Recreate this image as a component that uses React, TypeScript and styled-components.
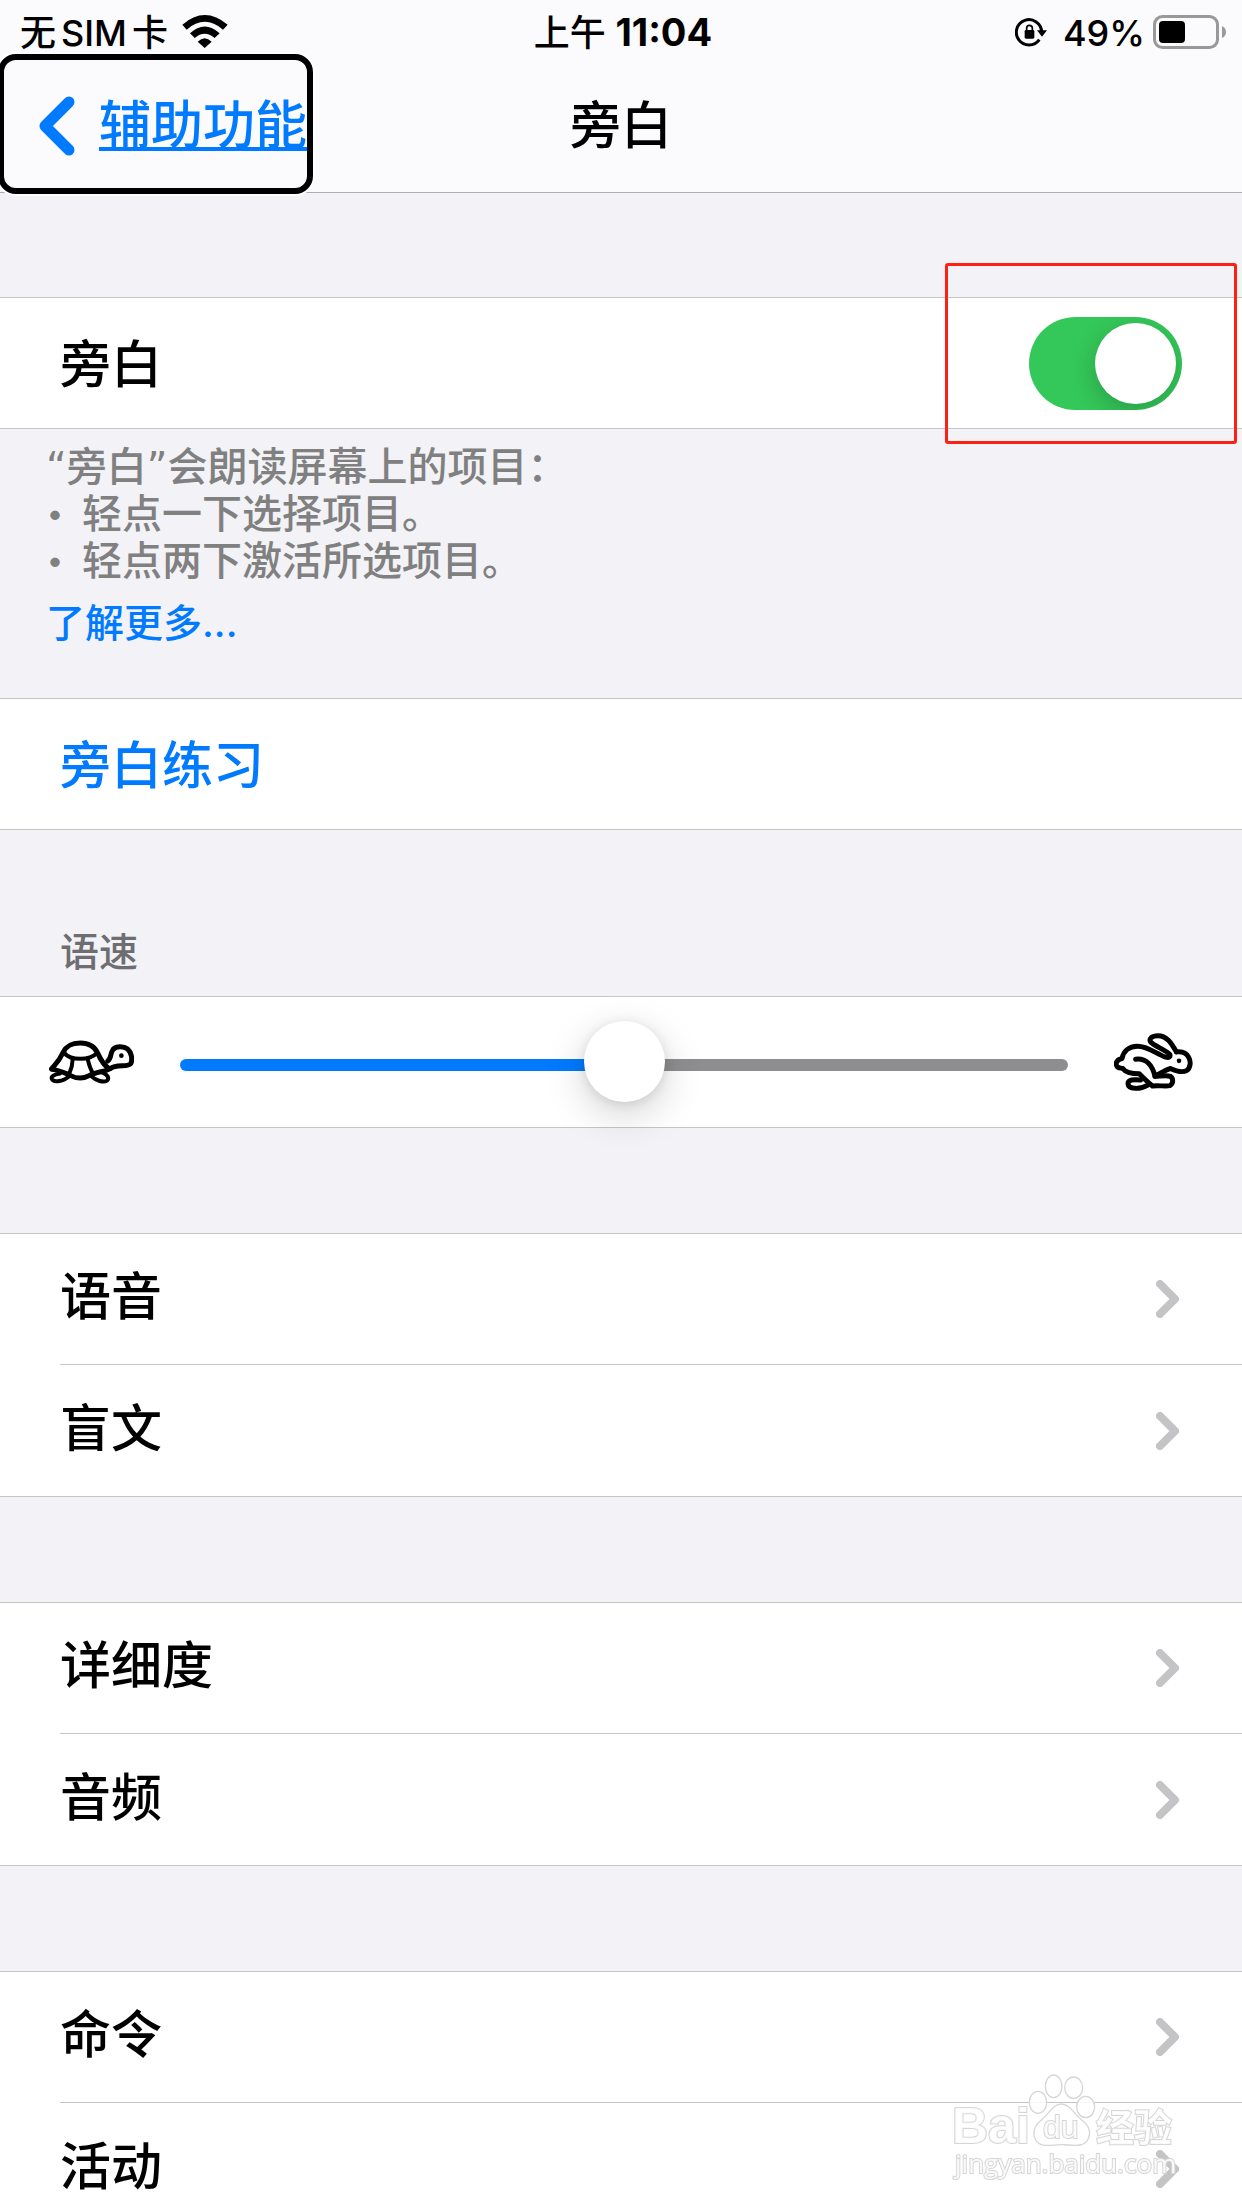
import React, { useState } from "react";
import styled, { createGlobalStyle } from "styled-components";

const blue = "#007aff";
const line = "#c6c6c8";

const GlobalStyle = createGlobalStyle`
  * { box-sizing: border-box; }
  body {
    margin: 0;
    background: #f2f2f7;
    color: #000;
    font-family: Inter, "Noto Sans CJK SC", sans-serif;
    font-size: 51px;
    font-weight: 500;
    line-height: 60px;
  }
  button, input { font: inherit; }
`;

const Screen = styled.div`
  height: 100vh;
  display: flex;
  flex-direction: column;
  overflow: hidden;
`;

const Header = styled.header`
  flex: none;
  background: #fbfafd;
  border-bottom: 1px solid #adadb1;
`;

const StatusBar = styled.div`
  height: 60px;
  padding: 0 16px 0 20px;
  display: grid;
  grid-template-columns: 1fr auto 1fr;
  align-items: center;
  font-size: 36px;
`;

const StatusGroup = styled.div<{ $end?: boolean }>`
  display: flex;
  align-items: center;
  justify-content: ${(p) => (p.$end ? "flex-end" : "flex-start")};
  gap: ${(p) => (p.$end ? "8px" : "14px")};
`;

const Carrier = styled.span`
  padding-top: 2px;
  span { margin: 0 5px; }
`;

const Clock = styled.time`
  padding-top: 2px;
  b {
    font-size: 38px;
    font-weight: 700;
  }
`;

const Percent = styled.span`
  padding: 2px 0 0 8px;
`;

const NavBar = styled.div`
  height: 132px;
  display: grid;
  grid-template-columns: 1fr auto 1fr;
  align-items: center;
`;

const BackButton = styled.button`
  justify-self: start;
  align-self: start;
  height: 128px;
  margin-left: 4px;
  padding: 4px 0 0 35px;
  display: flex;
  align-items: center;
  gap: 24px;
  border: 0;
  border-radius: 12px;
  background: transparent;
  color: ${blue};
  font-size: 52px;
  outline: 6px solid #000;
  box-shadow: 0 0 0 8px #fff;
  text-decoration: underline;
  text-decoration-thickness: 4px;
  text-underline-offset: 3px;
  text-decoration-skip-ink: none;
`;

const Title = styled.h1`
  margin: 0;
  font-size: 51px;
  font-weight: 500;
`;

const Main = styled.main`
  flex: 1;
  min-height: 0;
  padding-top: 104px;
  overflow-y: auto;
  scrollbar-width: none;
`;

const Group = styled.section`
  margin-bottom: 105px;
  background: #fff;
  border-top: 1px solid ${line};
  border-bottom: 1px solid ${line};
`;

const LeadGroup = styled(Group)`
  margin-bottom: 0;
`;

const Cell = styled.div`
  height: 130px;
  padding: 0 60px;
  display: flex;
  align-items: center;
  justify-content: space-between;
  label { padding-top: 4px; }
`;

const SliderCell = styled(Cell)`
  padding: 0 49px;
  gap: 46px;
  svg { flex: none; }
`;

const ActionButton = styled.button`
  display: block;
  width: 100%;
  height: 130px;
  padding: 4px 60px 0;
  border: 0;
  background: transparent;
  color: ${blue};
  text-align: left;
`;

const LinkList = styled.ul`
  margin: 0;
  padding: 0 0 0 60px;
  list-style: none;
  li + li { border-top: 1px solid ${line}; }
`;

const LinkRow = styled.a`
  height: 130px;
  padding-right: 63px;
  display: flex;
  align-items: center;
  justify-content: space-between;
  color: inherit;
  text-decoration: none;
  span { padding-bottom: 4px; }
  li + li & { height: 131px; }
`;

const SwitchBox = styled.span`
  position: relative;
  display: flex;
  &::after {
    content: "";
    position: absolute;
    inset: -54px -55px -34px -84px;
    border: 3px solid #ff2015;
    border-radius: 3px;
    pointer-events: none;
  }
`;

const Switch = styled.input`
  appearance: none;
  width: 153px;
  height: 93px;
  margin: 0;
  padding: 6px;
  display: flex;
  border-radius: 47px;
  overflow: hidden;
  background: #e9e9ea;
  &::before {
    content: "";
    width: 81px;
    height: 81px;
    border-radius: 50%;
    background: #fff;
    box-shadow: 0 8px 24px rgba(0, 0, 0, 0.2);
  }
  &:checked {
    justify-content: flex-end;
    background: #34c759;
  }
`;

const Note = styled.div`
  height: 269px;
  padding: 14px 46px 0;
  color: #808080;
  font-size: 40px;
  line-height: 47px;
  p, ul { margin: 0; padding: 0; }
  ul { list-style: none; }
  li { display: flex; }
`;

const Quote = styled.span`
  font-family: "DejaVu Sans", sans-serif;
  line-height: 1;
`;

const Bullet = styled.span`
  width: 36px;
  padding-left: 1px;
  font-size: 30px;
`;

const MoreLink = styled.a`
  display: block;
  width: fit-content;
  margin-top: 15px;
  color: ${blue};
  font-size: 39px;
  text-decoration: none;
`;

const Caption = styled.h2`
  height: 166px;
  margin: 0;
  padding: 96px 60px 0;
  color: #6d6d72;
  font-size: 39px;
  line-height: 52px;
  font-weight: 500;
`;

const Slider = styled.input`
  appearance: none;
  flex: 1;
  min-width: 0;
  height: 18px;
  margin: 0;
  padding: 6px 0 0;
  background: transparent;
  &::-webkit-slider-runnable-track {
    height: 12px;
    border-radius: 6px;
    background: linear-gradient(to right, ${blue} ${(p) => Number(p.value)}%, #8e8e90 0);
  }
  &::-webkit-slider-thumb {
    appearance: none;
    width: 81px;
    height: 81px;
    margin-top: -38px;
    border-radius: 50%;
    background: #fff;
    box-shadow: 0 12px 40px rgba(0, 0, 0, 0.18), 0 2px 12px rgba(0, 0, 0, 0.1);
  }
`;

const Watermark = styled.svg`
  position: fixed;
  right: 0;
  bottom: 0;
  pointer-events: none;
  fill: #fff;
  fill-opacity: 0.85;
  stroke: #d6d6d6;
  stroke-width: 1;
  text { paint-order: stroke; stroke-width: 2; }
`;

const WifiIcon = () => (
  <svg width="46" height="33" viewBox="548 39 136 99" aria-label="Wi-Fi">
    <path d="M548 68 Q615 10 684 68 L670 83 Q615 36 561 83Z" />
    <path d="M571 94 Q615 53 660 94 L645 108 Q615 82 585 108Z" />
    <path d="M594 119 Q615 98 636 119 L615 138Z" />
  </svg>
);

const RotationLockIcon = () => (
  <svg width="32" height="30" viewBox="165 50 96 88" aria-label="Rotation lock">
    <path d="M245 94 A38 38 0 1 0 238 117" fill="none" stroke="#000" strokeWidth="9" />
    <path d="M231 89 H261 L246 108Z" />
    <rect x="194" y="88" width="29" height="26" rx="4" />
    <path d="M200 90 V82 Q200 74 208 74 Q217 74 217 82 V90" fill="none" stroke="#000" strokeWidth="5" />
  </svg>
);

const BatteryIcon = () => (
  <svg width="73" height="34" viewBox="0 0 73 34" aria-label="Battery">
    <rect x="1.5" y="1.5" width="63" height="31" rx="8" fill="none" stroke="#999" strokeWidth="3" />
    <rect x="6" y="6" width="26" height="22" rx="4" />
    <path d="M69 11 Q73 13 73 17 Q73 21 69 23Z" fill="#999" />
  </svg>
);

const BackIcon = () => (
  <svg width="36" height="60" viewBox="0 0 36 60" aria-hidden="true">
    <path d="M30 6 L6 30 L30 54" fill="none" stroke={blue} strokeWidth="11" strokeLinecap="round" strokeLinejoin="round" />
  </svg>
);

const Chevron = () => (
  <svg width="23" height="38" viewBox="0 0 23 38" aria-hidden="true">
    <path d="M4 4 L19 19 L4 34" fill="none" stroke="#c4c4c6" strokeWidth="8" strokeLinecap="round" strokeLinejoin="round" />
  </svg>
);

const TurtleIcon = () => (
  <svg width="85" height="44" viewBox="147 184 256 132" fill="none" stroke="#000" strokeWidth="15" strokeLinecap="round" strokeLinejoin="round" aria-hidden="true">
    <path d="M155 271 C163 260 176 250 189 222 C200 200 215 193 241 193 C268 193 284 202 294 224 C303 244 312 260 328 270" />
    <path d="M155 271 C175 276 192 279 212 291 C230 300 252 300 268 291 C290 279 314 280 332 270 C350 254 384 268 394 254 C399 238 394 220 384 211 C372 202 350 202 340 212 C330 226 336 238 324 247" />
    <path d="M194 224 C212 246 270 246 290 224 M218 243 C218 260 214 272 208 285 M264 243 C268 260 272 272 280 285" strokeWidth="12" />
    <path d="M180 285 C160 288 152 294 156 302 C162 312 190 310 210 291 M272 291 C290 308 312 312 322 306 C330 298 322 288 310 283" strokeWidth="12" />
    <circle cx="365" cy="231" r="7" fill="#000" stroke="none" />
  </svg>
);

const RabbitIcon = () => (
  <svg width="79" height="58" viewBox="222 155 238 175" fill="none" stroke="#000" strokeWidth="15" strokeLinecap="round" strokeLinejoin="round" aria-hidden="true">
    <path d="M410 212 C394 184 380 163 355 163 C335 163 326 173 333 183 C342 193 378 207 390 219 C393 227 387 231 378 228 C350 219 325 195 293 195 C265 195 250 212 246 232 C230 236 226 245 230 254 C234 262 242 260 248 262 C258 275 275 278 298 278 C310 290 325 305 338 315 C352 312 378 317 390 314 C402 308 401 292 392 286 C382 282 365 285 345 286" />
    <path d="M287 234 C320 230 338 255 345 284 C364 278 374 266 392 262 C405 268 425 276 440 269 C454 260 454 240 447 228 C440 215 425 210 410 212" />
    <path d="M302 297 C280 294 264 296 264 308 C265 326 300 326 324 312" />
    <circle cx="418" cy="239" r="7" fill="#000" stroke="none" />
  </svg>
);

const BaiduMark = () => (
  <Watermark width="312" height="168" viewBox="0 0 312 168" aria-hidden="true">
    <g transform="scale(0.3333)" strokeWidth="4">
      <ellipse cx="324" cy="187" rx="26" ry="33" />
      <ellipse cx="371" cy="139" rx="25" ry="34" />
      <ellipse cx="431" cy="143" rx="27" ry="32" />
      <ellipse cx="467" cy="201" rx="27" ry="32" />
      <path d="M394 192 C420 192 432 222 455 240 C478 256 484 278 474 298 C460 325 425 314 394 314 C364 314 330 326 316 298 C306 278 314 256 334 240 C358 222 368 192 394 192Z" />
    </g>
    <text x="22" y="103" fontFamily="Liberation Sans" fontWeight="700" fontSize="50">Bai</text>
    <text x="113" y="98" fontFamily="Liberation Sans" fontWeight="400" fontSize="32">du</text>
    <text x="166" y="101" fontFamily="Noto Sans CJK SC" fontWeight="700" fontSize="38">经验</text>
    <text x="25" y="133" fontFamily="Open Sans" fontWeight="400" fontSize="26">jingyan.baidu.com</text>
  </Watermark>
);

const linkGroups = [
  ["语音", "盲文"],
  ["详细度", "音频"],
  ["命令", "活动"],
];

export default function App() {
  const [enabled, setEnabled] = useState(true);
  const [rate, setRate] = useState(50);

  return (
    <Screen>
      <GlobalStyle />
      <Header>
        <StatusBar>
          <StatusGroup>
            <Carrier>无<span>SIM</span>卡</Carrier>
            <WifiIcon />
          </StatusGroup>
          <Clock>上午 <b>11:04</b></Clock>
          <StatusGroup $end>
            <RotationLockIcon />
            <Percent>49%</Percent>
            <BatteryIcon />
          </StatusGroup>
        </StatusBar>
        <NavBar>
          <BackButton type="button">
            <BackIcon />
            <span>辅助功能</span>
          </BackButton>
          <Title>旁白</Title>
        </NavBar>
      </Header>

      <Main>
        <LeadGroup>
          <Cell>
            <label htmlFor="voiceover">旁白</label>
            <SwitchBox>
              <Switch id="voiceover" type="checkbox" role="switch" checked={enabled} onChange={(e) => setEnabled(e.target.checked)} />
            </SwitchBox>
          </Cell>
        </LeadGroup>
        <Note>
          <p><Quote>“</Quote>旁白<Quote>”</Quote>会朗读屏幕上的项目：</p>
          <ul>
            <li><Bullet>•</Bullet>轻点一下选择项目。</li>
            <li><Bullet>•</Bullet>轻点两下激活所选项目。</li>
          </ul>
          <MoreLink href="#more">了解更多...</MoreLink>
        </Note>

        <LeadGroup>
          <ActionButton type="button">旁白练习</ActionButton>
        </LeadGroup>

        <Caption id="rate-title">语速</Caption>
        <Group>
          <SliderCell>
            <TurtleIcon />
            <Slider type="range" min={0} max={100} value={rate} aria-labelledby="rate-title" onChange={(e) => setRate(Number(e.target.value))} />
            <RabbitIcon />
          </SliderCell>
        </Group>

        {linkGroups.map((labels) => (
          <Group key={labels[0]}>
            <LinkList>
              {labels.map((label) => (
                <li key={label}>
                  <LinkRow href={`#${label}`}>
                    <span>{label}</span>
                    <Chevron />
                  </LinkRow>
                </li>
              ))}
            </LinkList>
          </Group>
        ))}
      </Main>
      <BaiduMark />
    </Screen>
  );
}
